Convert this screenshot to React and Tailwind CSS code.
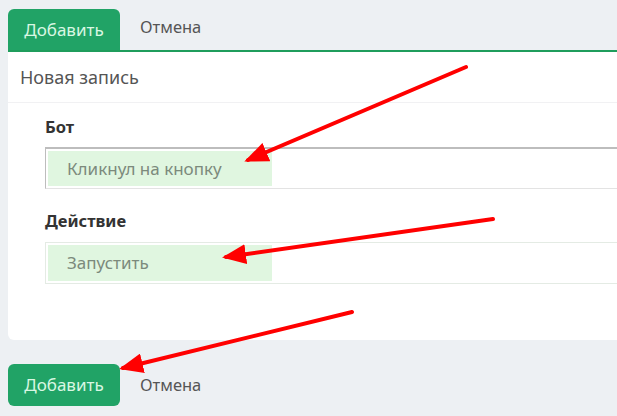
export default function App() {
  return (
    <div className="relative w-[617px] h-[416px] overflow-hidden bg-[#edf0f3] pl-2 font-['Noto_Sans',sans-serif]">
      {/* Tabs */}
      <div className="flex items-end pt-[9px] border-b-2 border-[#1f9d5c]">
        <button className="h-[41px] w-[112px] rounded-t-md bg-[#21a366] text-[17px] text-[#d9f7e3]">
          Добавить
        </button>
        <span className="ml-[20px] mb-[10px] text-[16.5px] text-[#555]">Отмена</span>
      </div>

      {/* Card */}
      <div className="w-[640px] h-[288px] bg-white rounded-b-md">
        <div className="h-[51px] flex items-center pl-3 text-[18px] text-[#555] border-b border-[#f1f1f3]">
          Новая запись
        </div>
        <div className="pl-[37px] pt-[14px]">
          <div className="text-[16.5px] font-bold text-[#333] leading-5">Бот</div>
          <div className="mt-[10px] h-[42px] border-t-2 border-l border-b border-[#bdbdbd] border-b-[#e3e3e3] p-[2px]">
            <div className="h-full w-[224px] bg-[#e0f6e0] pl-[19px] flex items-center text-[17px] text-[#7c8a7c]">
              Кликнул на кнопку
            </div>
          </div>
          <div className="mt-[22px] text-[16.5px] font-bold text-[#333] leading-5">Действие</div>
          <div className="mt-[11px] h-[42px] border border-[#e4ebe4] p-[2px]">
            <div className="h-full w-[224px] bg-[#e0f6e0] pl-[19px] flex items-center text-[17px] text-[#7c8a7c]">
              Запустить
            </div>
          </div>
        </div>
      </div>

      {/* Bottom actions */}
      <div className="flex items-center mt-[24px]">
        <button className="h-[42px] w-[112px] rounded-md bg-[#21a366] text-[17px] text-[#d9f7e3]">
          Добавить
        </button>
        <span className="ml-[20px] text-[16.5px] text-[#555]">Отмена</span>
      </div>

      {/* Annotation arrows */}
      <svg className="absolute inset-0 pointer-events-none" width="617" height="416">
        <defs>
          <marker id="ah" markerWidth="6" markerHeight="5" refX="5" refY="2.5" orient="auto" markerUnits="strokeWidth">
            <path d="M0,0 L6,2.5 L0,5 z" fill="#ff0000" />
          </marker>
        </defs>
        <g stroke="#ff0000" strokeWidth="4" strokeLinecap="round" fill="none">
          <line x1="466" y1="67" x2="248" y2="160" markerEnd="url(#ah)" />
          <line x1="493" y1="219" x2="226" y2="257" markerEnd="url(#ah)" />
          <line x1="352" y1="312" x2="123" y2="368" markerEnd="url(#ah)" />
        </g>
      </svg>
    </div>
  );
}
